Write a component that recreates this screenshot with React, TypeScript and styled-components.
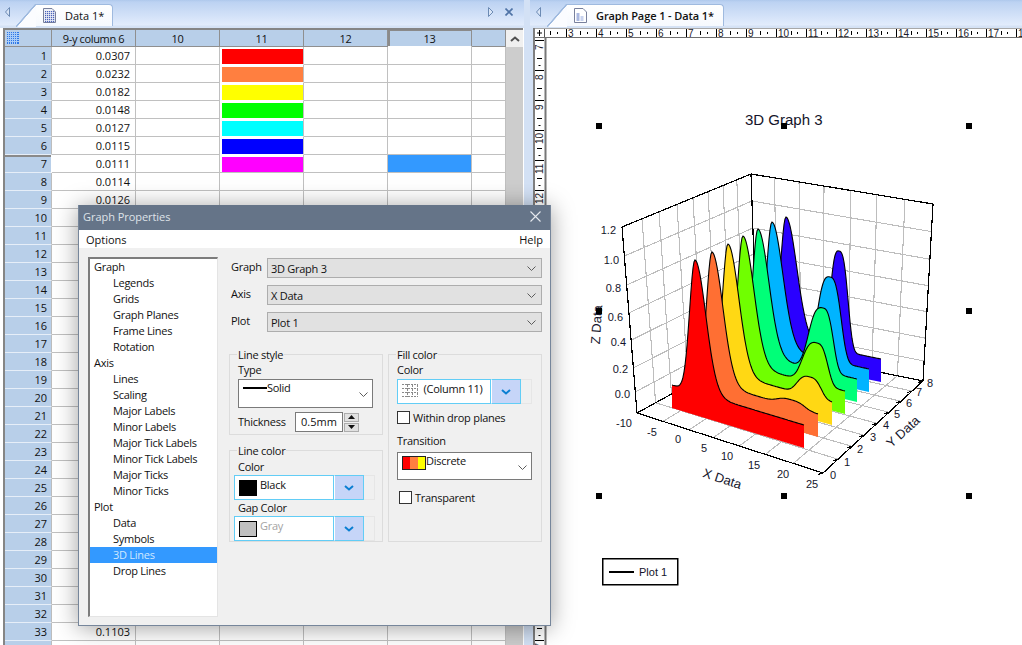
import React from "react";
import styled, { createGlobalStyle } from "styled-components";

const UI_FONT = `"Open Sans", "Noto Sans", sans-serif`;

const Global = createGlobalStyle`
  html, body { margin: 0; padding: 0; background: #fff; overflow: hidden; }
  #root { width: 1022px; height: 645px; overflow: hidden; }
  * { box-sizing: border-box; }
`;

const Page = styled.div`
  position: relative;
  display: flex;
  width: 1022px;
  height: 645px;
  overflow: hidden;
  font-family: ${UI_FONT};
  font-size: 11px;
  letter-spacing: -0.27px;
  color: #111;
`;

/* ---------- panes and tab strips ---------- */
const LeftPane = styled.section`
  display: flex;
  flex-direction: column;
  width: 524px;
  height: 100%;
`;
const Gutter = styled.div`
  width: 6px;
  background: #d3e1f5;
`;
const RightPane = styled.section`
  display: flex;
  flex-direction: column;
  flex: 1;
  min-width: 0;
  height: 100%;
`;
const TabStrip = styled.div<{ $pad: number }>`
  display: flex;
  align-items: flex-end;
  flex: none;
  height: 28px;
  padding: 0 11px 2px ${(p) => p.$pad}px;
  background: linear-gradient(#aec8ec 0, #bcd2f2 2px, #e2ecfc 25px, #d5e2f5 26px);
`;
const NavIcon = styled.svg<{ $gap?: number }>`
  flex: none;
  align-self: center;
  margin-right: ${(p) => p.$gap ?? 0}px;
  margin-top: -2px;
`;
const CloseIcon = styled.svg`
  flex: none;
  align-self: center;
  margin-left: 11px;
  margin-top: -2px;
`;
const Spacer = styled.div`
  flex: 1;
`;
const Tab = styled.div<{ $width: number; $strong?: boolean }>`
  position: relative;
  display: flex;
  align-items: center;
  gap: 9px;
  width: ${(p) => p.$width}px;
  height: 22px;
  padding-left: 7px;
  background: linear-gradient(#fff, #f6f9fe);
  border: 1px solid #9fbadf;
  border-bottom: 0;
  border-left: 0;
  border-radius: 0 4px 0 0;
  font-size: 11px;
  letter-spacing: ${(p) => (p.$strong ? "-0.1px" : "0")};
  font-weight: ${(p) => (p.$strong ? 600 : 400)};
  color: #111;
  &::before {
    content: "";
    position: absolute;
    top: -1px;
    left: -20px;
    width: 20px;
    height: 23px;
    background: linear-gradient(to top left, #fbfcff calc(50% - 1px), #9fbadf calc(50% - 0.5px), #9fbadf calc(50% + 0.5px), transparent calc(50% + 1px));
  }
`;

/* ---------- worksheet ---------- */
const SheetFrame = styled.div`
  display: flex;
  flex: 1;
  min-height: 0;
  margin-left: 3px;
  margin-right: 1px;
  border-top: 2px solid #858585;
  border-left: 2px solid #858585;
  overflow: hidden;
  letter-spacing: 0;
`;
const SheetBody = styled.div`
  flex: 1;
  min-width: 0;
`;
const Row = styled.div<{ $head?: boolean }>`
  display: flex;
  height: ${(p) => (p.$head ? 17 : 18)}px;
`;
const Corner = styled.div`
  display: flex;
  align-items: center;
  width: 47px;
  padding-left: 2px;
  background: #b8cfe9;
  border-right: 1px solid #8f8f8f;
  border-bottom: 1px solid #8f8f8f;
`;
const ColHead = styled.div<{ $w: number; $active?: boolean }>`
  display: flex;
  align-items: center;
  justify-content: center;
  width: ${(p) => p.$w}px;
  background: #b8cfe9;
  letter-spacing: -0.35px;
  border-right: 1px solid #8f8f8f;
  border-bottom: 1px solid ${(p) => (p.$active ? "#fff" : "#8f8f8f")};
  box-shadow: ${(p) => (p.$active ? "inset 2px 1px 0 #8a8a8a" : "none")};
`;
const RowHead = styled.div<{ $active?: boolean }>`
  width: 47px;
  padding-right: 4px;
  line-height: 17px;
  text-align: right;
  background: #b8cfe9;
  border-right: 1px solid ${(p) => (p.$active ? "#fff" : "#bdbdbd")};
  border-bottom: 1px solid #e6eef8;
  box-shadow: ${(p) => (p.$active ? "inset 0 2px 0 #8a8a8a" : "none")};
`;
const Cell = styled.div<{ $w: number; $selected?: boolean; $clearBottom?: boolean }>`
  width: ${(p) => p.$w}px;
  padding-right: 5px;
  line-height: 17px;
  text-align: right;
  background: ${(p) => (p.$selected ? "#3399ff" : "#fff")};
  border-right: 1px solid #c0c0c0;
  border-bottom: 1px solid ${(p) => (p.$clearBottom ? "#fff" : "#c0c0c0")};
`;
const SwatchCell = styled(Cell)`
  padding: 2px 0 0 2px;
`;
const Swatch = styled.div<{ $c: string }>`
  height: 15px;
  background: ${(p) => p.$c};
`;
const ScrollBar = styled.div`
  display: flex;
  flex-direction: column;
  flex: none;
  width: 17px;
  background: #cdcdcd;
`;
const ScrollButton = styled.div`
  display: flex;
  align-items: center;
  justify-content: center;
  height: 17px;
  background: #f0f0f0;
`;

/* ---------- graph page ---------- */
const GraphBody = styled.div`
  display: flex;
  flex-direction: column;
  flex: 1;
  min-height: 0;
  border-left: 3px solid #d3e1f5;
`;
const GraphInner = styled.div`
  display: flex;
  flex-direction: column;
  flex: 1;
  min-height: 0;
  border-left: 2px solid #7f7f7f;
`;
const RulerSvg = styled.svg`
  display: block;
  flex: none;
  font-family: "Liberation Sans", Arial, sans-serif;
  font-size: 10px;
  letter-spacing: 0;
`;
const GraphRow = styled.div`
  display: flex;
  flex: 1;
  min-height: 0;
`;
const Canvas = styled.div`
  flex: 1;
  min-width: 0;
  background: #fff;
`;
const ChartSvg = styled.svg`
  display: block;
  font-family: "Liberation Sans", Arial, sans-serif;
  font-size: 11px;
  letter-spacing: 0;
  fill: #14142a;
`;

/* ---------- dialog ---------- */
const Dialog = styled.div`
  position: absolute;
  left: 78px;
  top: 205px;
  display: flex;
  flex-direction: column;
  width: 473px;
  height: 421px;
  background: #f0f0f0;
  border: 1px solid #76869b;
  border-top: 0;
  box-shadow: 0 2px 22px rgba(0, 0, 0, 0.38);
`;
const TitleBar = styled.div`
  display: flex;
  align-items: center;
  justify-content: space-between;
  flex: none;
  height: 25px;
  padding: 0 9px 2px 4px;
  background: #657488;
  color: #dfe3e8;
  font-size: 11px;
  letter-spacing: -0.05px;
`;
const MenuBar = styled.div`
  display: flex;
  align-items: center;
  justify-content: space-between;
  flex: none;
  height: 18px;
  padding: 0 7px;
  background: #fff;
  letter-spacing: 0;
`;
const DialogBody = styled.div`
  display: flex;
  flex: 1;
  min-height: 0;
  padding: 9px 8px 0 9px;
`;
const Tree = styled.ul`
  flex: none;
  width: 130px;
  height: 360px;
  margin: 0;
  padding: 0;
  list-style: none;
  background: #fff;
  border: 1px solid #e4e4e4;
  border-top: 2px solid #7c7c7c;
  border-left: 2px solid #7c7c7c;
`;
const TreeItem = styled.li<{ $sub?: boolean; $selected?: boolean }>`
  height: 16px;
  padding-left: ${(p) => (p.$sub ? 23 : 4)}px;
  line-height: 16px;
  background: ${(p) => (p.$selected ? "#3399ff" : "transparent")};
  color: ${(p) => (p.$selected ? "#cfe8ff" : "#111")};
`;
const Props = styled.div`
  display: flex;
  flex-direction: column;
  flex: 1;
  min-width: 0;
  margin-left: 11px;
  padding-top: 1px;
`;
const TopFields = styled.div`
  display: grid;
  grid-template-columns: 38px 1fr;
  row-gap: 7px;
`;
const TopLabel = styled.label`
  padding-left: 2px;
  line-height: 18px;
`;
const ComboFlat = styled.div`
  display: flex;
  align-items: center;
  justify-content: space-between;
  height: 20px;
  padding: 0 5px 0 3px;
  background: #e1e1e1;
  border: 1px solid #adadad;
`;
const Groups = styled.div`
  display: grid;
  grid-template-columns: 154px 154px;
  column-gap: 5px;
  margin-top: 22px;
`;
const Stack = styled.div`
  display: flex;
  flex-direction: column;
  gap: 15px;
`;
const Group = styled.div<{ $h: number; $pt: number; $pl: number }>`
  position: relative;
  display: flex;
  flex-direction: column;
  height: ${(p) => p.$h}px;
  padding: ${(p) => p.$pt}px 0 0 ${(p) => p.$pl}px;
  border: 1px solid #dcdcdc;
`;
const GroupTitle = styled.span`
  position: absolute;
  top: -8px;
  left: 7px;
  padding: 0 1px;
  line-height: 16px;
  background: #f0f0f0;
`;
const FieldLabel = styled.div<{ $ml?: number; $mt?: number }>`
  height: 16px;
  margin-left: ${(p) => p.$ml ?? 0}px;
  margin-top: ${(p) => p.$mt ?? 0}px;
  line-height: 16px;
`;
const SelectBox = styled.div<{ $w: number; $h: number; $mt: number }>`
  position: relative;
  display: flex;
  flex: none;
  gap: 1px;
  width: ${(p) => p.$w}px;
  height: ${(p) => p.$h}px;
  margin-top: ${(p) => p.$mt}px;
  padding: 3px 4px;
  line-height: 16px;
  background: #fff;
  border: 1px solid #7a7a7a;
`;
const SelectText = styled.span`
  margin-top: -3px;
  margin-left: -1px;
`;
const SelectChevron = styled.span`
  margin-left: auto;
  align-self: center;
  display: flex;
  margin-top: 2px;
`;
const LineSample = styled.span`
  flex: none;
  width: 24px;
  height: 2px;
  margin-top: 4px;
  background: #000;
`;
const ThicknessRow = styled.div`
  display: flex;
  align-items: center;
  margin-top: 4px;
`;
const ThicknessLabel = styled.span`
  width: 57px;
  margin-top: -2px;
`;
const NumberBox = styled.div`
  width: 48px;
  height: 20px;
  padding-left: 5px;
  line-height: 17px;
  letter-spacing: 0;
  background: #fff;
  border: 1px solid #7a7a7a;
`;
const Spin = styled.div`
  display: flex;
  flex-direction: column;
  gap: 1px;
  width: 15px;
  margin-left: 1px;
`;
const SpinButton = styled.div`
  display: flex;
  align-items: center;
  justify-content: center;
  height: 9px;
  background: #e1e1e1;
  border: 1px solid #adadad;
`;
const ColorComboRow = styled.div<{ $w: number; $ghost: number; $mt?: number }>`
  display: flex;
  flex: none;
  width: ${(p) => p.$w + p.$ghost}px;
  height: 25px;
  margin-top: ${(p) => p.$mt ?? 0}px;
`;
const ColorComboMain = styled.div<{ $w: number }>`
  display: flex;
  flex: none;
  align-items: flex-start;
  gap: 3px;
  width: ${(p) => p.$w}px;
  padding: 4px;
  background: #fff;
  border: 1px solid #62cdf6;
`;
const ColorComboButton = styled.div`
  display: flex;
  flex: none;
  align-items: center;
  justify-content: center;
  width: 30px;
  background: #c6d5f8;
  border: 1px solid #62cdf6;
  border-left: 1px solid #fff;
`;
const ComboGhost = styled.div`
  flex: 1;
  border: 1px solid #e6e6e6;
  border-left: 0;
`;
const ColorChip = styled.span<{ $c: string }>`
  flex: none;
  width: 18px;
  height: 16px;
  background: ${(p) => p.$c};
  border: 1px solid #000;
`;
const ComboText = styled.span<{ $disabled?: boolean }>`
  margin-top: -2px;
  line-height: 13px;
  color: ${(p) => (p.$disabled ? "#a3a3a3" : "#111")};
`;
const CheckRow = styled.div<{ $mt: number; $ml?: number }>`
  display: flex;
  align-items: center;
  gap: 3px;
  height: 15px;
  margin-top: ${(p) => p.$mt}px;
  margin-left: ${(p) => p.$ml ?? 0}px;
`;
const CheckBox = styled.span`
  flex: none;
  width: 13px;
  height: 13px;
  background: #fff;
  border: 1px solid #333;
`;
const TransitionChip = styled.span`
  flex: none;
  width: 24px;
  height: 14px;
  background: linear-gradient(90deg, #f00 0 33%, #ff7f40 33% 66%, #ff0 66% 100%);
  border: 1px solid #222;
`;

/* ---------- small drawings ---------- */
const Chevron = () => (
  <svg width="9" height="5" viewBox="0 0 9 5">
    <polyline points="0.5,0.5 4.5,4.5 8.5,0.5" fill="none" stroke="#5c5c5c" strokeWidth="1" />
  </svg>
);
const BlueChevron = () => (
  <svg width="10" height="6" viewBox="0 0 10 6">
    <polyline points="1,1 5,4.5 9,1" fill="none" stroke="#0a7fd2" strokeWidth="2" />
  </svg>
);
const NavLeft = ({ gap }: { gap: number }) => (
  <NavIcon width="5" height="10" viewBox="0 0 5 10" $gap={gap}>
    <polygon points="4.5,0.5 4.5,9.5 0.5,5" fill="#d9e5f7" stroke="#6c8bb4" />
  </NavIcon>
);
const DataIcon = () => (
  <svg width="13" height="15" viewBox="0 0 13 15">
    <path d="M0.5 0.5H9L12.5 4V14.5H0.5Z" fill="#eef1f8" stroke="#78809c" />
    {[2, 4, 6, 8, 10].map((x) =>
      [3, 5, 7, 9, 11, 13].map((y) => <rect key={`${x}-${y}`} x={x} y={y} width="1.2" height="1.2" fill="#4a62b8" />)
    )}
  </svg>
);
const GraphIcon = () => (
  <svg width="13" height="15" viewBox="0 0 13 15">
    <path d="M0.5 0.5H9L12.5 4V14.5H0.5Z" fill="#fff" stroke="#78809c" />
    <rect x="2.5" y="5" width="3" height="8" fill="#aab8e0" />
    <rect x="6.5" y="8" width="3" height="5" fill="#c8d2ee" />
  </svg>
);
const SheetCornerIcon = () => (
  <svg width="12" height="12" viewBox="0 0 12 12" shapeRendering="crispEdges">
    <rect width="12" height="12" fill="#2f78e6" />
    {[1, 3, 5, 7, 9].map((v) => (
      <React.Fragment key={v}>
        <rect x={v} y="0" width="1" height="12" fill="#a9ccf7" />
        <rect x="0" y={v} width="12" height="1" fill="#a9ccf7" />
      </React.Fragment>
    ))}
  </svg>
);
const ColumnIcon = () => (
  <svg width="16" height="13" viewBox="0 0 16 13">
    {[0, 4, 8, 12].map((y) => (
      <line key={y} x1="0" y1={y + 0.5} x2="15" y2={y + 0.5} stroke="#8a8a8a" strokeDasharray="2 1" />
    ))}
    {[5.5, 10.5, 15.5].map((x) => (
      <line key={x} x1={x} y1="0" x2={x} y2="13" stroke="#8a8a8a" strokeDasharray="3 1" />
    ))}
  </svg>
);

/* ---------- data ---------- */
const VALUES: Record<number, string> = {
  1: "0.0307", 2: "0.0232", 3: "0.0182", 4: "0.0148", 5: "0.0127", 6: "0.0115",
  7: "0.0111", 8: "0.0114", 9: "0.0126", 33: "0.1103",
};
const COLORS: Record<number, string> = {
  1: "#ff0000", 2: "#ff7f40", 3: "#ffff00", 4: "#00ff00", 5: "#00ffff", 6: "#0000ff", 7: "#ff00ff",
};
const TREE: [string, boolean][] = [
  ["Graph", false], ["Legends", true], ["Grids", true], ["Graph Planes", true], ["Frame Lines", true], ["Rotation", true],
  ["Axis", false], ["Lines", true], ["Scaling", true], ["Major Labels", true], ["Minor Labels", true],
  ["Major Tick Labels", true], ["Minor Tick Labels", true], ["Major Ticks", true], ["Minor Ticks", true],
  ["Plot", false], ["Data", true], ["Symbols", true], ["3D Lines", true], ["Drop Lines", true],
];

/* ---------- chart geometry (screen coordinates of the reference) ---------- */
type P = [number, number];
const lerp = (a: P, b: P, t: number): P => [a[0] + (b[0] - a[0]) * t, a[1] + (b[1] - a[1]) * t];
const LT: P = [622, 227], LB: P = [637, 413];
const BT: P = [751, 174], BB: P = [757, 347];
const RT: P = [933, 204], RB: P = [923, 381];
const FB: P = [823, 473];
const Z_F = [0, 0.156, 0.312, 0.462, 0.608, 0.758, 0.887];
const Y_F = [0, 0.155, 0.287, 0.426, 0.55, 0.667, 0.783, 0.89, 1];
const Y_FRONT = [0, 0.15, 0.29, 0.41, 0.54, 0.66, 0.78, 0.89, 1];
const X_F = [0, 0.128, 0.264, 0.401, 0.549, 0.692, 0.846, 1];
const X_FRONT = [0, 0.14, 0.28, 0.41, 0.55, 0.69, 0.84, 1];

type Seg = [P, P];
const wallGrid: Seg[] = [
  ...Z_F.slice(1).map((f): Seg => [lerp(LT, LB, f), lerp(BT, BB, f)]),
  ...Z_F.slice(1).map((f): Seg => [lerp(BT, BB, f), lerp(RT, RB, f)]),
  ...Y_F.slice(1, -1).map((f): Seg => [lerp(LT, BT, f), lerp(LB, BB, f)]),
  ...X_F.slice(1, -1).map((f): Seg => [lerp(BT, RT, f), lerp(BB, RB, f)]),
];
const floorGrid: Seg[] = [
  ...X_FRONT.slice(1, -1).map((f, i): Seg => [lerp(LB, FB, f), lerp(BB, RB, X_F[i + 1])]),
  ...Y_FRONT.slice(1, -1).map((f, i): Seg => [lerp(FB, RB, f), lerp(LB, BB, Y_F[i + 1])]),
];
const edges: Seg[] = [
  [LT, BT], [BT, RT], [LT, LB], [BT, BB], [RT, RB], [LB, BB], [BB, RB], [LB, FB], [FB, RB],
];
const yTicks: Seg[] = Y_FRONT.map((f): Seg => {
  const p = lerp(FB, RB, f);
  return [p, [p[0] - 5, p[1] + 1.5]];
});

type Ribbon = {
  color: string; peak: P; left: P; right: P; bump?: P; wl?: number; wr?: number;
};
const RIBBONS: Ribbon[] = [
  { color: "#2a00ff", peak: [786, 217], left: [763, 358], right: [881, 382], bump: [839, 251], wl: 10.5, wr: 10.5 },
  { color: "#00b4ff", peak: [772, 222], left: [749, 365.6], right: [869, 392], bump: [830, 277], wl: 15, wr: 13 },
  { color: "#00ff78", peak: [758, 229], left: [735, 373], right: [857, 402], bump: [823, 308], wl: 17, wr: 12 },
  { color: "#70ff00", peak: [743, 236], left: [720, 381.6], right: [845, 414], bump: [817, 343], wl: 17, wr: 12.5 },
  { color: "#ffd814", peak: [728, 244], left: [705, 390], right: [832, 425], bump: [810, 377], wl: 15, wr: 13 },
  { color: "#ff6f33", peak: [712, 252], left: [689, 399], right: [818, 437], bump: [792, 400], wl: 17, wr: 15 },
  { color: "#ff0000", peak: [695, 260], left: [672, 408], right: [804, 448] },
];
const H0 = 23;
const ribbonTop = (r: Ribbon) => {
  const baseAt = (x: number) => r.left[1] + ((r.right[1] - r.left[1]) * (x - r.left[0])) / (r.right[0] - r.left[0]);
  const a1 = baseAt(r.peak[0]) - r.peak[1] - H0;
  const a2 = r.bump ? baseAt(r.bump[0]) - r.bump[1] - H0 : 0;
  const pts: P[] = [];
  for (let x = r.left[0]; x <= r.right[0]; x += 1) {
    const d1 = x - r.peak[0];
    const s1 = d1 < 0 ? 5.4 : 10.8;
    let h = H0 + a1 * Math.exp(-(d1 * d1) / (2 * s1 * s1));
    if (r.bump) {
      const d2 = x - r.bump[0];
      const w = d2 < 0 ? r.wl! : r.wr!;
      h += a2 * Math.exp(-Math.pow(Math.abs(d2) / w, 3));
    }
    pts.push([x, baseAt(x) - h]);
  }
  return pts;
};
const str = (pts: P[]) => pts.map((p) => `${p[0].toFixed(1)},${p[1].toFixed(1)}`).join(" ");

const Z_LABELS: [string, number, number][] = [
  ["1.2", 616, 234], ["1.0", 619, 264], ["0.8", 621, 292], ["0.6", 623, 321],
  ["0.4", 626, 346], ["0.2", 628, 373], ["0.0", 630, 398],
];
const X_LABELS: [string, number, number][] = [
  ["-10", 624, 427], ["-5", 652, 436], ["0", 678, 443], ["5", 704, 452],
  ["10", 727, 460], ["15", 754, 469], ["20", 783, 478], ["25", 812, 488],
];
const Y_LABELS: [string, number, number][] = [
  ["0", 833, 479], ["1", 847, 466], ["2", 860, 453], ["3", 873, 441], ["4", 886, 429],
  ["5", 897, 418], ["6", 909, 407], ["7", 919, 396], ["8", 930, 387],
];
const HANDLES: P[] = [
  [599, 126], [784, 126], [969, 126], [599, 311], [969, 311], [599, 496], [784, 496], [969, 496],
];

const Chart = () => (
  <ChartSvg width="475" height="607" viewBox="547 38 475 607">
    <g shapeRendering="crispEdges" fill="none" stroke="#bdbdbd" strokeWidth="1.1">
      {[...wallGrid, ...floorGrid].map(([a, b], i) => (
        <line key={i} x1={a[0]} y1={a[1]} x2={b[0]} y2={b[1]} />
      ))}
    </g>
    <g shapeRendering="crispEdges" stroke="#000" strokeWidth="1.2">
      {[...edges, ...yTicks].map(([a, b], i) => (
        <line key={i} x1={a[0]} y1={a[1]} x2={b[0]} y2={b[1]} />
      ))}
    </g>
    {RIBBONS.map((r) => {
      const top = ribbonTop(r);
      return (
        <g key={r.color}>
          <polygon points={`${str(top)} ${r.right[0]},${r.right[1]} ${r.left[0]},${r.left[1]}`} fill={r.color} />
          <polyline points={str(top)} fill="none" stroke="#000" strokeWidth="1.1" />
        </g>
      );
    })}
    <text x="745" y="125" fontSize="15">3D Graph 3</text>
    {Z_LABELS.map(([t, x, y]) => <text key={t} x={x} y={y} textAnchor="end">{t}</text>)}
    {X_LABELS.map(([t, x, y]) => <text key={t} x={x} y={y} textAnchor="middle">{t}</text>)}
    {Y_LABELS.map(([t, x, y]) => <text key={t} x={x} y={y} textAnchor="middle">{t}</text>)}
    <text x="0" y="0" fontSize="13" textAnchor="middle" transform="translate(721 483) rotate(18)">X Data</text>
    <text x="0" y="0" fontSize="13" textAnchor="middle" transform="translate(906 435) rotate(-42)">Y Data</text>
    <text x="0" y="0" fontSize="13" textAnchor="middle" transform="translate(601 325) rotate(-86)">Z Data</text>
    {HANDLES.map(([x, y]) => <rect key={`${x}-${y}`} x={x - 3} y={y - 3} width="6" height="6" fill="#000" />)}
    <rect x="602.75" y="558.75" width="75" height="26" fill="#fff" stroke="#000" strokeWidth="1.5" />
    <rect x="609" y="571" width="25" height="2" fill="#000" />
    <text x="639" y="576" fontSize="11">Plot 1</text>
  </ChartSvg>
);

const TopRuler = () => {
  const nums = Array.from({ length: 16 }, (_, i) => i + 3);
  return (
    <RulerSvg width="487" height="10" viewBox="535 28 487 10">
      <rect x="535" y="28" width="487" height="10" fill="#fff" />
      <rect x="535" y="28" width="487" height="1" fill="#a8a8a8" />
      <rect x="535" y="37" width="487" height="1" fill="#6f6f6f" />
      <path d="M539.5 30v6M537 33h5" stroke="#000" fill="none" />
      <rect x="544" y="29" width="1" height="8" fill="#555" />
      <rect x="550" y="31" width="1" height="4" fill="#000" />
      <rect x="557" y="32" width="1" height="2" fill="#000" />
      {nums.map((n) => {
        const x = 566 + (n - 3) * 30;
        return (
          <g key={n}>
            <rect x={x} y="29" width="1" height="8" fill="#000" />
            <text x={x + 2} y="36.5" fill="#1a1a2a">{n}</text>
            <rect x={x + 14 + (n > 9 ? 1 : 0)} y="31" width="1" height="4" fill="#000" />
            <rect x={x + 21} y="32" width="1" height="2" fill="#000" />
          </g>
        );
      })}
    </RulerSvg>
  );
};

const LeftRuler = () => {
  const nums = Array.from({ length: 21 }, (_, i) => i + 7);
  return (
    <RulerSvg width="12" height="607" viewBox="535 38 12 607">
      <rect x="535" y="38" width="12" height="607" fill="#fff" />
      <rect x="544.5" y="38" width="2" height="607" fill="#777" />
      {nums.map((n) => {
        const y = 40 + (n - 7) * 30;
        return (
          <g key={n}>
            <rect x="535" y={y} width="9" height="1" fill="#000" />
            <text x="0" y="0" transform={`translate(543 ${y + (n > 9 ? 14 : 10)}) rotate(-90)`} fill="#1a1a2a">{n}</text>
            <rect x="537" y={y + 18} width="5" height="1" fill="#000" />
            <rect x="538.5" y={y + 25} width="2" height="1" fill="#000" />
          </g>
        );
      })}
    </RulerSvg>
  );
};

const COL_WIDTHS: [string, number][] = [
  ["9-y column 6", 84], ["10", 84], ["11", 84], ["12", 84], ["13", 84], ["", 34],
];

export default function App() {
  const rows = Array.from({ length: 34 }, (_, i) => i + 1);
  return (
    <Page>
      <Global />
      <LeftPane>
        <TabStrip $pad={5}>
          <NavLeft gap={26} />
          <Tab $width={77}>
            <DataIcon />
            Data 1*
          </Tab>
          <Spacer />
          <NavIcon width="6" height="10" viewBox="0 0 6 10">
            <polygon points="0.5,0.5 0.5,9.5 5,5" fill="#d9e5f7" stroke="#6c8bb4" />
          </NavIcon>
          <CloseIcon width="8" height="8" viewBox="0 0 8 8">
            <path d="M0.5 0.5L7.5 7.5M7.5 0.5L0.5 7.5" stroke="#4f73a6" strokeWidth="1.6" />
          </CloseIcon>
        </TabStrip>
        <SheetFrame>
          <SheetBody>
            <Row $head>
              <Corner><SheetCornerIcon /></Corner>
              {COL_WIDTHS.map(([t, w], i) => (
                <ColHead key={i} $w={w} $active={t === "13"}>{t}</ColHead>
              ))}
            </Row>
            {rows.map((n) => (
              <Row key={n}>
                <RowHead $active={n === 7}>{n < 34 ? n : ""}</RowHead>
                <Cell $w={84}>{VALUES[n]}</Cell>
                <Cell $w={84} />
                {COLORS[n] ? (
                  <SwatchCell $w={84} $clearBottom={n !== 7}><Swatch $c={COLORS[n]} /></SwatchCell>
                ) : (
                  <Cell $w={84} />
                )}
                <Cell $w={84} />
                <Cell $w={84} $selected={n === 7} />
                <Cell $w={34} />
              </Row>
            ))}
          </SheetBody>
          <ScrollBar>
            <ScrollButton>
              <svg width="10" height="6" viewBox="0 0 10 6">
                <polyline points="1,5 5,1.5 9,5" fill="none" stroke="#505050" strokeWidth="2" />
              </svg>
            </ScrollButton>
          </ScrollBar>
        </SheetFrame>
      </LeftPane>
      <Gutter />
      <RightPane>
        <TabStrip $pad={6}>
          <NavLeft gap={26} />
          <Tab $width={157} $strong>
            <GraphIcon />
            Graph Page 1 - Data 1*
          </Tab>
        </TabStrip>
        <GraphBody>
          <GraphInner>
            <TopRuler />
            <GraphRow>
              <LeftRuler />
              <Canvas><Chart /></Canvas>
            </GraphRow>
          </GraphInner>
        </GraphBody>
      </RightPane>

      <Dialog>
        <TitleBar>
          Graph Properties
          <svg width="11" height="11" viewBox="0 0 11 11">
            <path d="M0.5 0.5L10.5 10.5M10.5 0.5L0.5 10.5" stroke="#e6e9ee" strokeWidth="1.1" />
          </svg>
        </TitleBar>
        <MenuBar>
          <span>Options</span>
          <span>Help</span>
        </MenuBar>
        <DialogBody>
          <Tree>
            {TREE.map(([t, sub]) => (
              <TreeItem key={t} $sub={sub} $selected={t === "3D Lines"}>{t}</TreeItem>
            ))}
          </Tree>
          <Props>
            <TopFields>
              <TopLabel>Graph</TopLabel>
              <ComboFlat>3D Graph 3<Chevron /></ComboFlat>
              <TopLabel>Axis</TopLabel>
              <ComboFlat>X Data<Chevron /></ComboFlat>
              <TopLabel>Plot</TopLabel>
              <ComboFlat>Plot 1<Chevron /></ComboFlat>
            </TopFields>
            <Groups>
              <Stack>
                <Group $h={81} $pt={7} $pl={8}>
                  <GroupTitle>Line style</GroupTitle>
                  <FieldLabel>Type</FieldLabel>
                  <SelectBox $w={135} $h={29} $mt={1}>
                    <LineSample />
                    <SelectText>Solid</SelectText>
                    <SelectChevron><Chevron /></SelectChevron>
                  </SelectBox>
                  <ThicknessRow>
                    <ThicknessLabel>Thickness</ThicknessLabel>
                    <NumberBox>0.5mm</NumberBox>
                    <Spin>
                      <SpinButton>
                        <svg width="7" height="4" viewBox="0 0 7 4"><polygon points="3.5,0 7,4 0,4" fill="#111" /></svg>
                      </SpinButton>
                      <SpinButton>
                        <svg width="7" height="4" viewBox="0 0 7 4"><polygon points="0,0 7,0 3.5,4" fill="#111" /></svg>
                      </SpinButton>
                    </Spin>
                  </ThicknessRow>
                </Group>
                <Group $h={92} $pt={8} $pl={4}>
                  <GroupTitle>Line color</GroupTitle>
                  <FieldLabel $ml={4}>Color</FieldLabel>
                  <ColorComboRow $w={130} $ghost={11}>
                    <ColorComboMain $w={100}>
                      <ColorChip $c="#000" />
                      <ComboText>Black</ComboText>
                    </ColorComboMain>
                    <ColorComboButton><BlueChevron /></ColorComboButton>
                    <ComboGhost />
                  </ColorComboRow>
                  <FieldLabel $ml={4}>Gap Color</FieldLabel>
                  <ColorComboRow $w={130} $ghost={11}>
                    <ColorComboMain $w={100}>
                      <ColorChip $c="#c0c0c0" />
                      <ComboText $disabled>Gray</ComboText>
                    </ColorComboMain>
                    <ColorComboButton><BlueChevron /></ColorComboButton>
                    <ComboGhost />
                  </ColorComboRow>
                </Group>
              </Stack>
              <Group $h={188} $pt={7} $pl={8}>
                <GroupTitle>Fill color</GroupTitle>
                <FieldLabel>Color</FieldLabel>
                <ColorComboRow $w={124} $ghost={11} $mt={1}>
                  <ColorComboMain $w={94}>
                    <ColumnIcon />
                    <ComboText>&nbsp;(Column 11)</ComboText>
                  </ColorComboMain>
                  <ColorComboButton><BlueChevron /></ColorComboButton>
                  <ComboGhost />
                </ColorComboRow>
                <CheckRow $mt={6}>
                  <CheckBox />
                  Within drop planes
                </CheckRow>
                <FieldLabel $mt={8}>Transition</FieldLabel>
                <SelectBox $w={135} $h={28} $mt={3}>
                  <TransitionChip />
                  <SelectText>Discrete</SelectText>
                  <SelectChevron><Chevron /></SelectChevron>
                </SelectBox>
                <CheckRow $mt={10} $ml={2}>
                  <CheckBox />
                  Transparent
                </CheckRow>
              </Group>
            </Groups>
          </Props>
        </DialogBody>
      </Dialog>
    </Page>
  );
}
